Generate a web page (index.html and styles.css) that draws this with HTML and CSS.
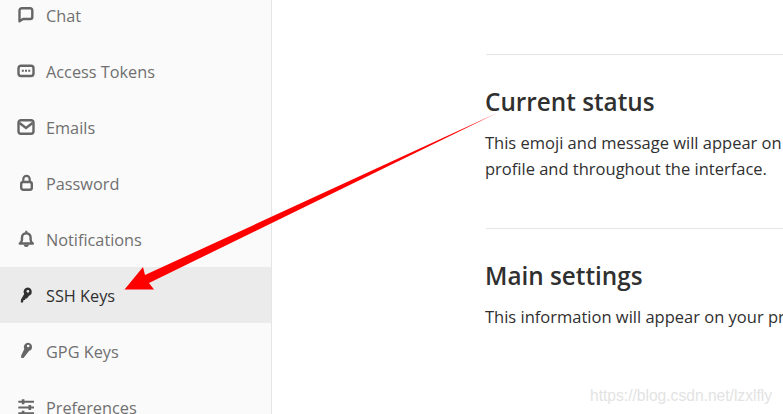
FILE: index.html
```html
<!DOCTYPE html>
<html lang="en">
<head>
    <meta charset="UTF-8">
    <meta name="viewport" content="width=device-width, initial-scale=1.0">
    <title>SSH Keys</title>
    <link rel="stylesheet" href="styles.css">
</head>
<body>
    <div class="layout">
        <nav class="sidebar">
            <a class="nav-item">
                <svg class="icon" viewBox="0 0 18 18"><path d="M2.500 15.300V4.500A2.300 2.300 0 0 1 4.800 2.200h8.500a2 2 0 0 1 2 2v6.800a2 2 0 0 1-2 2H6z" fill="none" stroke="currentColor" stroke-width="2.400" stroke-linejoin="round"/></svg>
                <span>Chat</span>
            </a>
            <a class="nav-item">
                <svg class="icon" viewBox="0 0 18 18"><rect x="1.500" y="3.700" width="15" height="10.300" rx="2.500" fill="none" stroke="currentColor" stroke-width="2.400"/><path d="M4.800 7.800h2v2h-2zM8 7.800h2v2H8zM11.200 7.800h2v2h-2z" fill="currentColor"/></svg>
                <span>Access Tokens</span>
            </a>
            <a class="nav-item">
                <svg class="icon" viewBox="0 0 18 18"><rect x="1.500" y="2.200" width="15" height="13.600" rx="2.500" fill="none" stroke="currentColor" stroke-width="2.400"/><path d="M2.500 5l6.500 5 6.500-5" fill="none" stroke="currentColor" stroke-width="2.400"/></svg>
                <span>Emails</span>
            </a>
            <a class="nav-item">
                <svg class="icon" viewBox="0 0 18 18"><path d="M6.300 8V5a3.200 3.200 0 0 1 6.400 0v3" fill="none" stroke="currentColor" stroke-width="2.200"/><rect x="4.200" y="8" width="10.600" height="7.800" rx="2" fill="none" stroke="currentColor" stroke-width="2.400"/></svg>
                <span>Password</span>
            </a>
            <a class="nav-item">
                <svg class="icon" viewBox="0 0 18 18"><path d="M2.800 13.500c1.500-1 2.200-2.200 2.200-4V7.500a4.300 4.300 0 0 1 8.600 0v2c0 1.800.7 3 2.200 4z" fill="none" stroke="currentColor" stroke-width="2.400" stroke-linejoin="round"/><path d="M6.800 14.500h5a2.500 2.500 0 0 1-5 0zM8.300 0.800h2v2h-2z" fill="currentColor"/></svg>
                <span>Notifications</span>
            </a>
            <a class="nav-item active">
                <svg class="icon" viewBox="0 0 18 18"><path d="M10.500 1.500a4.300 4.300 0 0 1 1.500 8.300L10 12.500H8.500L8 14H6.500L6 16.500H3.800L4 13.500 7.200 8a4.300 4.300 0 0 1 3.300-6.500zm.4 2.400a1.400 1.400 0 1 0 0 2.800 1.400 1.400 0 0 0 0-2.800z" fill="currentColor" fill-rule="evenodd"/></svg>
                <span>SSH Keys</span>
            </a>
            <a class="nav-item">
                <svg class="icon" viewBox="0 0 18 18"><path d="M10.700.7a4.300 4.300 0 0 1 1.300 8.400L6.500 16H4.200v-2.400L7.300 7a4.300 4.300 0 0 1 3.400-6.300zm.5 2a1.300 1.300 0 1 0 0 2.600 1.300 1.300 0 0 0 0-2.600z" fill="currentColor" fill-rule="evenodd"/></svg>
                <span>GPG Keys</span>
            </a>
            <a class="nav-item">
                <svg class="icon" viewBox="0 0 18 18"><path d="M1.300 3.700h15.700M1.300 9.500h15.700M1.300 15.200h15.700" fill="none" stroke="currentColor" stroke-width="2"/><path d="M4.800 1.300h2.600v5H4.800zM11.500 7h2.600v5h-2.600zM4.800 12.700h2.600v5H4.800z" fill="currentColor"/></svg>
                <span>Preferences</span>
            </a>
        </nav>
        <main class="content">
            <hr>
            <section class="block">
                <h2>Current status</h2>
                <p>This emoji and message will appear on your profile and throughout the interface.</p>
            </section>
            <hr>
            <section class="block">
                <h2>Main settings</h2>
                <p>This information will appear on your profile.</p>
            </section>
        </main>
    </div>

    <svg class="arrow" viewBox="0 0 783 414"><path d="M497 113 145 275 143 267 124.500 289.500 154 289.500 149 283z" fill="#ff0000"/></svg>
    <div class="watermark">https://blog.csdn.net/lzxlfly</div>
</body>
</html>
```

FILE: styles.css
```css
html, body {
    height: 100%;
}
body {
    margin: 0;
    overflow: hidden;
    background: #fff;
    color: #303030;
    font-family: "Open Sans", "Noto Sans", Arial, sans-serif;
    font-size: 16.500px;
}
.layout {
    display: flex;
    height: 100%;
}
.sidebar {
    flex: 0 0 271px;
    margin-top: -13px;
    background: #fafafa;
    border-right: 1px solid #e5e5e5;
    height: 440px;
}
.nav-item {
    display: flex;
    align-items: center;
    gap: 11px;
    height: 56px;
    padding-left: 17px;
    color: #707070;
    font-size: 16.300px;
}
.nav-item span {
    padding-top: 2px;
}
.nav-item .icon {
    color: #666;
}
.nav-item.active {
    background: #ebebeb;
    color: #303030;
}
.nav-item.active .icon {
    color: #303030;
}
.icon {
    width: 18px;
    height: 18px;
    flex: none;
}
.content {
    flex: none;
    width: 370px;
    margin-left: 214px;
    padding-top: 54px;
}
.content hr {
    width: 400px;
    height: 1px;
    margin: 0;
    border: none;
    background: #e5e5e5;
}
.block {
    height: 173px;
    margin-left: -1px;
}
h2 {
    margin: 0;
    padding-top: 29px;
    font-size: 24.300px;
    line-height: 36px;
    font-weight: 600;
}
p {
    margin: 10px 0 0;
    line-height: 26px;
}
.arrow {
    position: absolute;
    top: 0;
    left: 0;
    width: 783px;
    height: 414px;
}
.watermark {
    position: absolute;
    left: 590px;
    top: 387px;
    font-family: "Liberation Sans", Arial, sans-serif;
    font-size: 15.600px;
    color: #e3e3e3;
}
```
